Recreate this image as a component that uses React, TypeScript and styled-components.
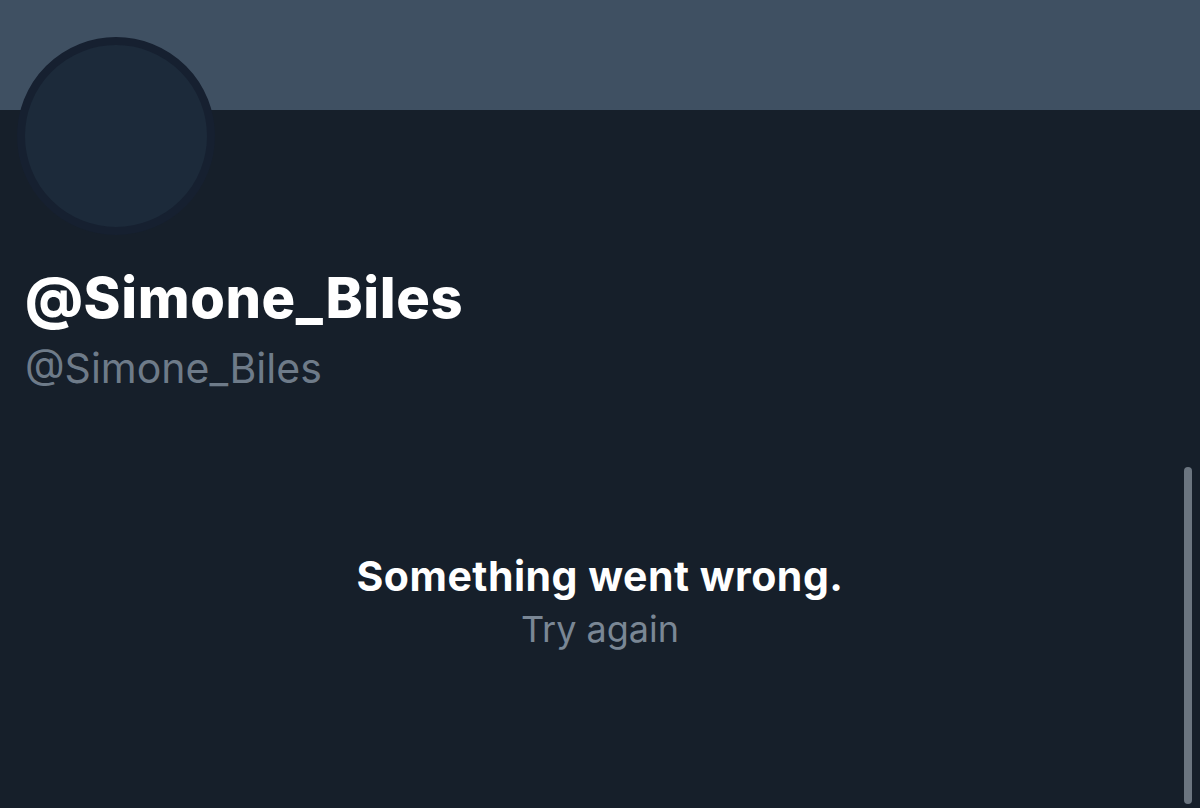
import styled, { createGlobalStyle } from "styled-components";

const GlobalStyle = createGlobalStyle`
  html, body {
    margin: 0;
    padding: 0;
    background: #161f2a;
  }
  body {
    font-family: Inter, "Open Sans", "Noto Sans", sans-serif;
    -webkit-font-smoothing: antialiased;
  }
`;

const Page = styled.div`
  position: relative;
  width: 1200px;
  height: 808px;
  overflow: hidden;
  background: #161f2a;
`;

const Banner = styled.div`
  height: 110px;
  background: #3f5062;
`;

const Header = styled.div`
  padding: 0 0 0 17px;
`;

const Avatar = styled.div`
  width: 182px;
  height: 182px;
  margin-top: -73px;
  border-radius: 50%;
  border: 8px solid #162030;
  background: #1c2a3a;
`;

const Names = styled.div`
  display: flex;
  flex-direction: column;
  padding-left: 8px;
  margin-top: 33px;
`;

const DisplayName = styled.div`
  color: #ffffff;
  font-size: 56px;
  font-weight: 800;
  letter-spacing: 0.6px;
  line-height: 60px;
`;

const Handle = styled.div`
  color: #6e7b89;
  font-size: 41px;
  font-weight: 400;
  line-height: 48px;
  margin-top: 16px;
`;

const ErrorBox = styled.div`
  display: flex;
  flex-direction: column;
  align-items: center;
  margin-top: 160px;
`;

const ErrorTitle = styled.div`
  color: #ffffff;
  font-size: 41px;
  font-weight: 700;
  line-height: 48px;
  letter-spacing: 0.5px;
`;

const Retry = styled.div`
  color: #7a8795;
  font-size: 36px;
  font-weight: 400;
  line-height: 44px;
  margin-top: 7px;
`;

const Scrollbar = styled.div`
  position: absolute;
  left: 1184px;
  top: 467px;
  width: 8px;
  height: 337px;
  border-radius: 4px;
  background: #6b7580;
`;

export default function App() {
  return (
    <Page>
      <GlobalStyle />
      <Banner />
      <Header>
        <Avatar />
        <Names>
          <DisplayName>@Simone_Biles</DisplayName>
          <Handle>@Simone_Biles</Handle>
        </Names>
      </Header>
      <ErrorBox>
        <ErrorTitle>Something went wrong.</ErrorTitle>
        <Retry>Try again</Retry>
      </ErrorBox>
      <Scrollbar />
    </Page>
  );
}
